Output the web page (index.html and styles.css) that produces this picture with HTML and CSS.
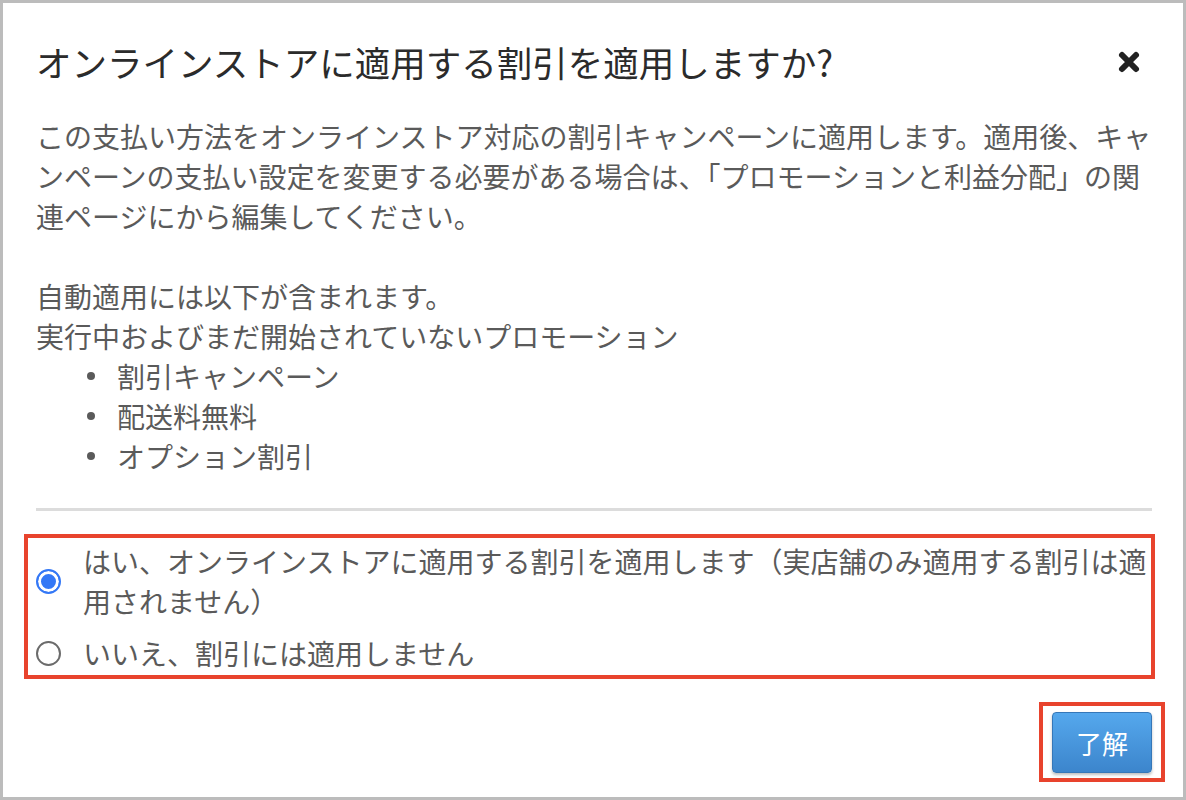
FILE: index.html
```html
<!DOCTYPE html>
<html lang="ja">
<head>
    <meta charset="UTF-8">
    <meta name="viewport" content="width=device-width, initial-scale=1.0">
    <title>割引の適用</title>
    <link rel="stylesheet" href="styles.css">
</head>
<body>
    <div class="dialog">
        <div class="dialog-header">
            <h1>オンラインストアに適用する割引を適用しますか?</h1>
            <button class="close" type="button" aria-label="閉じる">
                <svg width="24" height="24" viewBox="0 0 24 24">
                    <path d="M5 5 L19 19 M19 5 L5 19" stroke="#222" stroke-width="6" stroke-linecap="round" fill="none"/>
                </svg>
            </button>
        </div>

        <div class="dialog-body">
            <p>この支払い方法をオンラインストア対応の割引キャンペーンに適用します。適用後、キャンペーンの支払い設定を変更する必要がある場合は、「プロモーションと利益分配」の関連ページにから編集してください。</p>

            <p>自動適用には以下が含まれます。<br>
            実行中およびまだ開始されていないプロモーション</p>
            <ul class="items">
                <li>割引キャンペーン</li>
                <li>配送料無料</li>
                <li>オプション割引</li>
            </ul>
        </div>

        <hr class="divider">

        <div class="options highlight">
            <label class="option">
                <input type="radio" name="apply" checked>
                <span>はい、オンラインストアに適用する割引を適用します（実店舗のみ適用する割引は適用されません）</span>
            </label>
            <label class="option">
                <input type="radio" name="apply">
                <span>いいえ、割引には適用しません</span>
            </label>
        </div>

        <div class="dialog-footer">
            <div class="highlight btn-wrap">
                <button class="btn" type="button">了解</button>
            </div>
        </div>
    </div>
</body>
</html>
```

FILE: styles.css
```css
html, body {
    margin: 0;
    padding: 0;
}

body {
    font-family: "Noto Sans CJK JP", "Noto Sans", sans-serif;
    background: #fff;
}

.dialog {
    width: 1186px;
    height: 800px;
    box-sizing: border-box;
    border: 3px solid #bcbcbc;
    padding: 35px 31px 0 33px;
    display: flex;
    flex-direction: column;
}

.dialog-header {
    display: flex;
    align-items: center;
    justify-content: space-between;
}

h1 {
    margin: 0;
    font-size: 35.5px;
    line-height: 48px;
    font-weight: 400;
    color: #2b2b2b;
}

.close {
    border: none;
    background: none;
    padding: 0;
    margin-right: 11px;
    width: 24px;
    height: 24px;
    display: flex;
    cursor: pointer;
}

.dialog-body {
    margin-top: 30px;
    font-size: 28px;
    line-height: 40px;
    color: #5a5a5a;
}

.dialog-body p {
    margin: 0 0 40px;
}

.dialog-body p + p {
    margin-bottom: 0;
}

.items {
    list-style: none;
    margin: 0;
    padding: 0;
}

.items li {
    display: flex;
    align-items: center;
    padding-left: 51px;
}

.items li::before {
    content: "";
    width: 8px;
    height: 8px;
    border-radius: 50%;
    background: #5a5a5a;
    margin-right: 22px;
}

.divider {
    border: none;
    height: 3px;
    background: #dcdcdc;
    margin: 32px 0 23px;
}

.highlight {
    border: 4px solid #e8432d;
}

.options {
    margin: 0 -3px 0 -12px;
    padding: 3px 0 2px 8px;
    display: flex;
    flex-direction: column;
    gap: 12px;
}

.option {
    display: flex;
    align-items: center;
    gap: 22px;
    font-size: 28px;
    line-height: 40px;
    color: #5a5a5a;
    cursor: pointer;
}

.option input {
    appearance: none;
    -webkit-appearance: none;
    flex: none;
    width: 25px;
    height: 25px;
    margin: 0;
    border: 2px solid #6b6b6b;
    border-radius: 50%;
    background: #fff;
}

.option input:checked {
    border-color: #3478f6;
    background: #3478f6;
    box-shadow: inset 0 0 0 3px #fff;
}

.dialog-footer {
    display: flex;
    justify-content: flex-end;
    margin: 23px -13px 0 0;
}

.btn-wrap {
    padding: 6px 9px 5px 9px;
}

.btn {
    width: 100px;
    height: 61px;
    box-sizing: border-box;
    border: 1px solid #3577b8;
    border-radius: 4px;
    background: linear-gradient(#55a8ed, #3c85cc);
    box-shadow: 0 2px 3px rgba(0,0,0,0.25);
    color: #fff;
    font-family: "Noto Sans CJK JP", "Noto Sans", sans-serif;
    font-size: 26px;
    cursor: pointer;
}
```
